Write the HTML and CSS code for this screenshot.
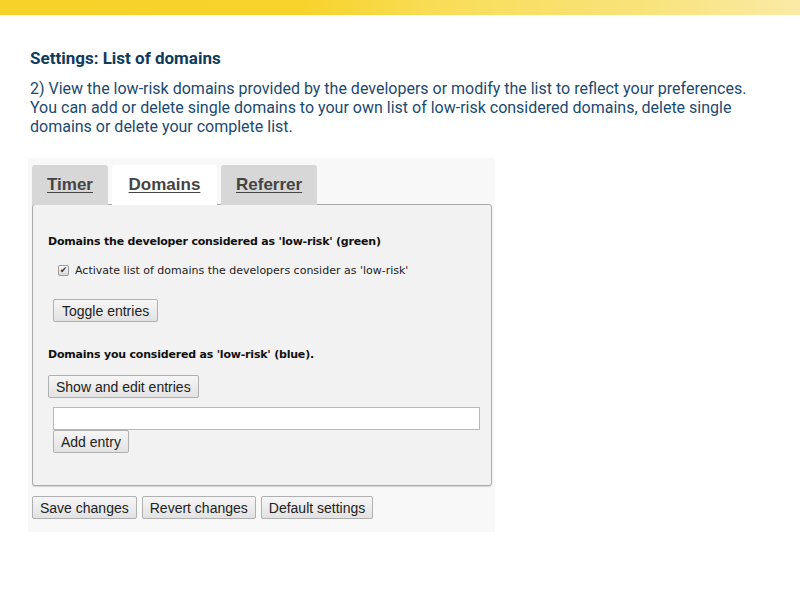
FILE: index.html
```html
<!DOCTYPE html>
<html>
<head>
<meta charset="utf-8">
<link rel="stylesheet" href="styles.css">
</head>
<body>
<div class="topbar"></div>
<main class="content">
  <h1 class="title">Settings: List of domains</h1>
  <p class="intro">2) View the low-risk domains provided by the developers or modify the list to reflect your preferences. You can add or delete single domains to your own list of low-risk considered domains, delete single domains or delete your complete list.</p>
  <div class="shot">
    <div class="tabs">
      <a class="tab">Timer</a>
      <a class="tab active">Domains</a>
      <a class="tab">Referrer</a>
    </div>
    <div class="panel">
      <div class="sec-title">Domains the developer considered as 'low-risk' (green)</div>
      <label class="check"><span class="box">&#10004;</span> Activate list of domains the developers consider as 'low-risk'</label>
      <div class="indent"><button class="btn">Toggle entries</button></div>
      <div class="sec-title sec2">Domains you considered as 'low-risk' (blue).</div>
      <div><button class="btn">Show and edit entries</button></div>
      <div class="entry">
        <input class="field" type="text">
        <button class="btn">Add entry</button>
      </div>
    </div>
    <div class="actions">
      <button class="btn">Save changes</button>
      <button class="btn">Revert changes</button>
      <button class="btn">Default settings</button>
    </div>
  </div>
</main>
</body>
</html>
```

FILE: styles.css
```css
html, body { margin: 0; padding: 0; background: #fff; }
.topbar {
  height: 15px;
  background: linear-gradient(to right, #f7d229 0%, #f7d32c 38%, #f9dd58 55%, #f8e37a 80%, #fbeaa6 100%);
}
.content { padding: 0 30px; font-family: Roboto, "Noto Sans", sans-serif; }
.title {
  margin: 32px 0 0;
  font-size: 17px;
  font-weight: 700;
  color: #0e3b5c;
  line-height: 22px;
}
.intro {
  margin: 10px 0 0;
  font-size: 16px;
  line-height: 19px;
  color: #1b4a70;
}
.shot {
  margin: 22px 0 0 -2px;
  width: 467px;
  height: 374px;
  background: #f8f8f8;
  padding: 7px 0 0 4px;
  box-sizing: border-box;
  font-family: "Liberation Sans", Arial, sans-serif;
}
.tabs { display: flex; gap: 4px; height: 39px; position: relative; z-index: 1; }
.tab {
  display: block;
  height: 40px;
  box-sizing: border-box;
  background: #d7d7d7;
  border-radius: 3px 3px 0 0;
  padding: 10px 15px 0;
  font-weight: 700;
  font-size: 17px;
  color: #444;
  text-decoration: underline;
  text-underline-offset: 2px;
}
.tab:nth-child(1) { width: 76px; }
.tab.active { background: #fff; width: 105px; text-align: center; padding: 10px 0 0; }
.tab:nth-child(3) { width: 96px; }
.panel {
  width: 460px;
  height: 282px;
  box-sizing: border-box;
  background: #f2f2f2;
  border: 1px solid #ababab;
  border-radius: 3px;
  box-shadow: 0 1px 1px rgba(0,0,0,0.15);
  padding: 30px 15px 0;
}
.sec-title {
  font-family: "DejaVu Sans", sans-serif;
  font-size: 11px;
  font-weight: 700;
  color: #111;
  line-height: 13px;
  letter-spacing: -0.2px;
}
.sec2 { margin-top: 26px; margin-bottom: 14px; }
.check {
  display: flex;
  align-items: center;
  gap: 6px;
  margin: 16px 0 0 10px;
  font-family: "DejaVu Sans", sans-serif;
  font-size: 11px;
  color: #222;
}
.box {
  width: 11px;
  height: 11px;
  box-sizing: border-box;
  border: 1px solid #9a9a9a;
  border-radius: 2px;
  background: linear-gradient(#fafafa, #d8d8d8);
  font-size: 9px;
  line-height: 9px;
  text-align: center;
  color: #333;
}
.indent { margin: 22px 0 0 5px; }
.btn {
  font-family: "Liberation Sans", Arial, sans-serif;
  font-size: 14px;
  color: #222;
  background: linear-gradient(#f6f6f6, #e2e2e2);
  border: 1px solid #b0b0b0;
  border-radius: 2px;
  height: 23px;
  padding: 0 7px;
  margin: 0;
}
.indent .btn { padding: 0 8px; }
.entry { display: flex; flex-direction: column; align-items: flex-start; margin: 9px 0 0 5px; }
.field {
  width: 427px;
  height: 23px;
  box-sizing: border-box;
  border: 1px solid #b8b8b8;
  background: #fff;
  margin: 0;
}
.actions { display: flex; gap: 5px; margin-top: 10px; }
```
